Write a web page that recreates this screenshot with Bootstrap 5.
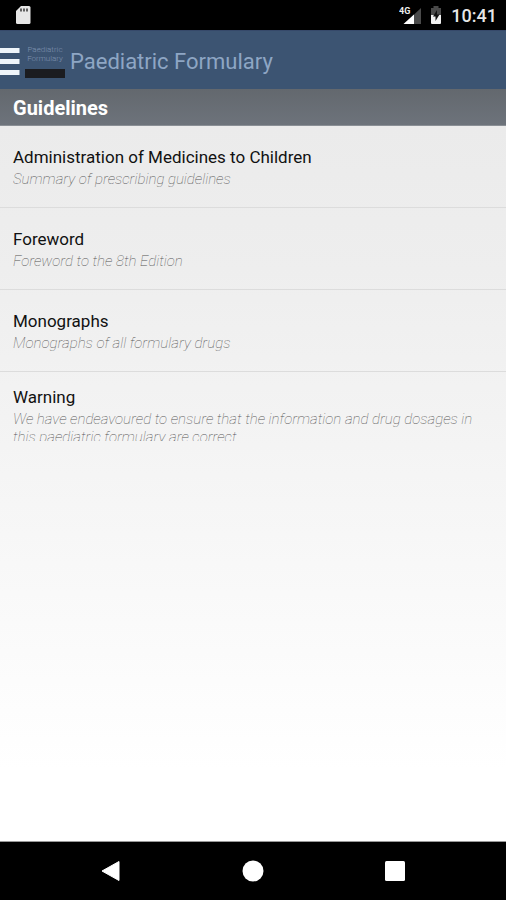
<!DOCTYPE html>
<html lang="en">
<head>
<meta charset="utf-8">
<meta name="viewport" content="width=device-width, initial-scale=1">
<title>Paediatric Formulary</title>
<link href="https://cdn.jsdelivr.net/npm/bootstrap@5.3.0/dist/css/bootstrap.min.css" rel="stylesheet">
<style>
body { font-family: Roboto, "Liberation Sans", sans-serif; background: #000; }
.status-bar { height: 30px; padding: 0 9px 0 15px; gap: 9px; }
.clock { font-size: 18px; font-weight: 500; line-height: 30px; padding-top: 2px; color: #e6e6e6; }
.app-bar { height: 59px; padding-top: 3px; background: #3c5472; gap: 5px; border-top: 1px solid #36496a; }
.app-logo { width: 40px; font-size: 8px; line-height: 9px; font-weight: 300; color: #7f93b0; border-bottom: 9px solid #1b1c20; padding-bottom: 6px; }
.app-title { font-size: 22px; line-height: 28px; color: #8ea6c4; }
.section-title { height: 37px; padding: 0 13px; font-size: 20px; line-height: 38px; font-weight: 700; color: #fff; background: linear-gradient(#63686e, #6d737b); border-bottom: 1px solid #8a8f95; }
.content { background: linear-gradient(#ebebeb, #eeeeee 20%, #fff 90%); border-bottom: 1px solid #999; }
.entry { height: 82px; padding: 0 13px; color: #111; border-bottom: 1px solid #dcdcdc; }
.entry:last-child { border-bottom: 0; }
.entry-name { font-size: 17px; line-height: 22px; }
.entry-text { font-size: 15px; line-height: 18px; margin-top: 2px; max-height: 31px; font-weight: 100; font-style: italic; color: #555; }
.nav-keys { height: 58px; padding: 0 40px; }
.nav-keys svg { display: block; margin: 0 auto; }
</style>
<script src="https://cdn.jsdelivr.net/npm/bootstrap@5.3.0/dist/js/bootstrap.bundle.min.js"></script>
</head>
<body class="d-flex flex-column min-vh-100">
<div class="status-bar d-flex align-items-center">
  <svg class="me-auto" width="16" height="20" viewBox="0 0 16 20" aria-hidden="true"><path d="M6 1h8q1.500 0 1.500 1.500v15q0 1.500-1.500 1.500H2.500Q1 19 1 17.500V6z" fill="#e6e6e6"/><path d="M6 3.500v3M9 3.500v3M12 3.500v3" stroke="#333" stroke-width="1.500"/></svg>
  <svg width="22" height="20" viewBox="0 0 22 20" role="img" aria-label="4G signal"><path d="M22 3v16H5z" fill="#4a4a4a"/><path d="M15 9.500V19H4.500z" fill="#fff"/><text x="0" y="9" font-size="9" font-weight="700" fill="#eee">4G</text></svg>
  <svg width="12" height="20" viewBox="0 0 12 20" aria-hidden="true"><path d="M3.500 3V1h5v2H11v7H1V3z" fill="#4a4a4a"/><path d="M1 10h10v8q0 1-1 1H2q-1 0-1-1z" fill="#f2f2f2"/><path d="M7 5 3 11.500h2.500V16l4-6.500H7z" fill="#111"/></svg>
  <span class="clock">10:41</span>
</div>
<header class="app-bar d-flex align-items-center">
  <button type="button" class="btn border-0 p-0 d-flex" aria-label="Open menu">
    <svg width="20" height="30" viewBox="0 0 20 30" aria-hidden="true"><path d="M0 3.500h19.500M0 14.500h19.500M0 25.500h19.500" stroke="#eff5fa" stroke-width="5"/></svg>
  </button>
  <div class="app-logo text-center">Paediatric Formulary</div>
  <h1 class="app-title fw-normal m-0">Paediatric Formulary</h1>
</header>
<main class="flex-grow-1 d-flex flex-column">
  <h2 class="section-title m-0">Guidelines</h2>
  <div class="content flex-grow-1">
    <a href="#administration" class="entry d-flex flex-column justify-content-center text-decoration-none">
      <span class="entry-name">Administration of Medicines to Children</span>
      <span class="entry-text overflow-hidden">Summary of prescribing guidelines</span>
    </a>
    <a href="#foreword" class="entry d-flex flex-column justify-content-center text-decoration-none">
      <span class="entry-name">Foreword</span>
      <span class="entry-text overflow-hidden">Foreword to the 8th Edition</span>
    </a>
    <a href="#monographs" class="entry d-flex flex-column justify-content-center text-decoration-none">
      <span class="entry-name">Monographs</span>
      <span class="entry-text overflow-hidden">Monographs of all formulary drugs</span>
    </a>
    <a href="#warning" class="entry d-flex flex-column justify-content-center text-decoration-none">
      <span class="entry-name">Warning</span>
      <span class="entry-text overflow-hidden">We have endeavoured to ensure that the information and drug dosages in this paediatric formulary are correct</span>
    </a>
  </div>
</main>
<nav class="nav-keys d-flex align-items-center" aria-label="System">
  <button type="button" class="btn border-0 p-0 flex-fill" aria-label="Back"><svg width="22" height="22" viewBox="0 0 22 22" aria-hidden="true"><path d="M19 1.500v19L2 11z" fill="#fff" stroke="#fff" stroke-linejoin="round"/></svg></button>
  <button type="button" class="btn border-0 p-0 flex-fill" aria-label="Home"><svg width="22" height="22" viewBox="0 0 22 22" aria-hidden="true"><circle cx="11" cy="11" r="10.500" fill="#fff"/></svg></button>
  <button type="button" class="btn border-0 p-0 flex-fill" aria-label="Overview"><svg width="22" height="22" viewBox="0 0 22 22" aria-hidden="true"><rect x="1" y="1" width="20" height="20" rx="1.500" fill="#fff"/></svg></button>
</nav>
</body>
</html>
